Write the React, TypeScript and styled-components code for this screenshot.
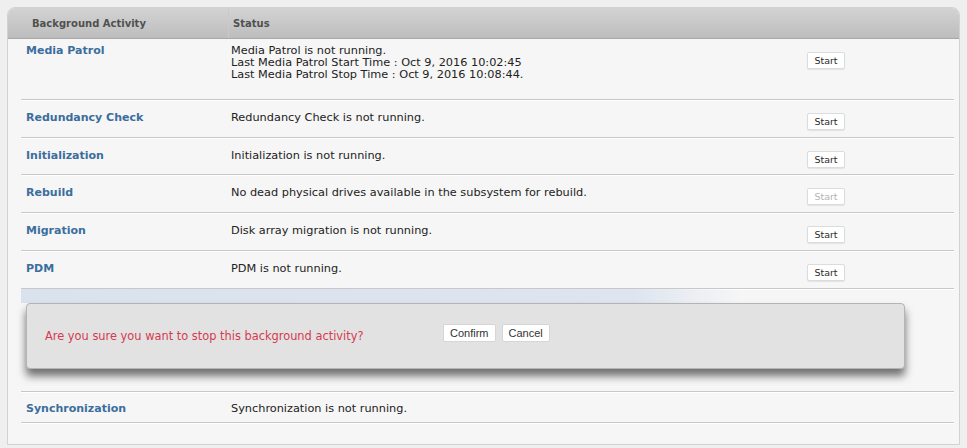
import React from 'react';
import styled, { createGlobalStyle } from 'styled-components';

const GlobalStyle = createGlobalStyle`
  html, body {
    margin: 0;
    padding: 0;
    background: #efefef;
    font-family: "DejaVu Sans", Verdana, sans-serif;
  }
`;

/* PANEL */
const Page = styled.div`
  padding: 7px 7px 0 7px;
  height: 448px;
  box-sizing: border-box;
`;

const Panel = styled.div`
  height: 438px;
  box-sizing: border-box;
  background: #f6f6f6;
  border: 1px solid #d2d2d2;
  border-radius: 8px 8px 0 0;
  overflow: hidden;
`;

const Header = styled.div`
  display: grid;
  grid-template-columns: 220px 1fr;
  height: 30px;
  background: linear-gradient(#d3d3d3, #bdbdbd);
  border-bottom: 1px solid #a8a8a8;
`;

const HeaderCell = styled.div<{ $first?: boolean }>`
  display: flex;
  align-items: center;
  padding-left: ${(p) => (p.$first ? '24px' : '4px')};
  font-size: 10px;
  font-weight: bold;
  color: #505050;
  border-left: ${(p) => (p.$first ? 'none' : '1px solid #c9c9c9')};
`;

const Body = styled.div`
  padding: 0 5px 0 13px;
`;

/* ROWS */
const Row = styled.div<{ $height: number; $top: number }>`
  display: grid;
  grid-template-columns: 206px 1fr 147px;
  align-items: start;
  height: ${(p) => p.$height}px;
  padding-top: ${(p) => p.$top}px;
  box-sizing: border-box;
  border-bottom: 1px solid #c8c8c8;
  box-shadow: 0 1px 0 #ffffff;
`;

const Name = styled.div`
  padding-left: 5px;
  font-size: 11px;
  line-height: 12px;
  font-weight: bold;
  color: #3b6e9c;
`;

const Status = styled.div`
  padding-left: 4px;
  font-size: 11.3px;
  line-height: 12px;
  color: #222;
`;

const StartButton = styled.button<{ $offset: number }>`
  justify-self: start;
  margin-top: ${(p) => p.$offset}px;
  width: 38px;
  height: 17px;
  padding: 0;
  background: #fff;
  border: 1px solid #dcdcdc;
  border-radius: 2px;
  font-family: "DejaVu Sans", Verdana, sans-serif;
  font-size: 9.5px;
  color: ${(p) => (p.disabled ? '#b4b4b4' : '#2a2a2a')};
  box-shadow: 0 1px 1px rgba(0, 0, 0, 0.08);
`;

/* CONFIRM */
const ConfirmArea = styled.div`
  height: 103px;
  box-sizing: border-box;
  border-bottom: 1px solid #c8c8c8;
  box-shadow: 0 1px 0 #ffffff;
`;

const Highlight = styled.div`
  height: 14px;
  width: 720px;
  background: linear-gradient(to right, #dae2ee 0%, #dee5f0 85%, rgba(230, 235, 243, 0) 100%);
`;

const Dialog = styled.div`
  display: flex;
  align-items: center;
  height: 66px;
  margin: 0 49px 0 5px;
  padding-left: 18px;
  box-sizing: border-box;
  background: #e2e2e2;
  border: 1px solid #b4b4b4;
  border-radius: 4px;
  box-shadow: 0 7px 9px rgba(0, 0, 0, 0.55);
`;

const DialogText = styled.div`
  width: 398px;
  font-size: 11.4px;
  color: #d63a50;
`;

const DialogButtons = styled.div`
  display: flex;
  gap: 6px;
  margin-top: -6px;
`;

const DialogButton = styled.button`
  height: 18px;
  padding: 0 6px;
  background: #fff;
  border: 1px solid #d6d6d6;
  border-radius: 2px;
  font-family: "Liberation Sans", Arial, sans-serif;
  font-size: 11px;
  color: #333;
`;

type Activity = {
  name: string;
  status: string[];
  disabled?: boolean;
};

const top: Activity[] = [
  {
    name: 'Media Patrol',
    status: [
      'Media Patrol is not running.',
      'Last Media Patrol Start Time : Oct 9, 2016 10:02:45',
      'Last Media Patrol Stop Time : Oct 9, 2016 10:08:44.',
    ],
  },
  { name: 'Redundancy Check', status: ['Redundancy Check is not running.'] },
  { name: 'Initialization', status: ['Initialization is not running.'] },
  {
    name: 'Rebuild',
    status: ['No dead physical drives available in the subsystem for rebuild.'],
    disabled: true,
  },
  { name: 'Migration', status: ['Disk array migration is not running.'] },
  { name: 'PDM', status: ['PDM is not running.'] },
];

const rowHeights = [61, 38, 37, 38, 38, 38];

const App: React.FC = () => {
  return (
    <Page>
      <GlobalStyle />
      <Panel>
        <Header>
          <HeaderCell $first>Background Activity</HeaderCell>
          <HeaderCell>Status</HeaderCell>
        </Header>
        <Body>
          {top.map((a, i) => (
            <Row key={a.name} $height={rowHeights[i]} $top={i === 0 ? 6 : 12}>
              <Name>{a.name}</Name>
              <Status>
                {a.status.map((s) => (
                  <div key={s}>{s}</div>
                ))}
              </Status>
              <StartButton disabled={a.disabled} $offset={i === 0 ? 7 : 1}>
                Start
              </StartButton>
            </Row>
          ))}

          <ConfirmArea>
            <Highlight />
            <Dialog>
              <DialogText>Are you sure you want to stop this background activity?</DialogText>
              <DialogButtons>
                <DialogButton>Confirm</DialogButton>
                <DialogButton>Cancel</DialogButton>
              </DialogButtons>
            </Dialog>
          </ConfirmArea>

          <Row $height={31} $top={11}>
            <Name>Synchronization</Name>
            <Status>Synchronization is not running.</Status>
          </Row>
        </Body>
      </Panel>
    </Page>
  );
};

export default App;
